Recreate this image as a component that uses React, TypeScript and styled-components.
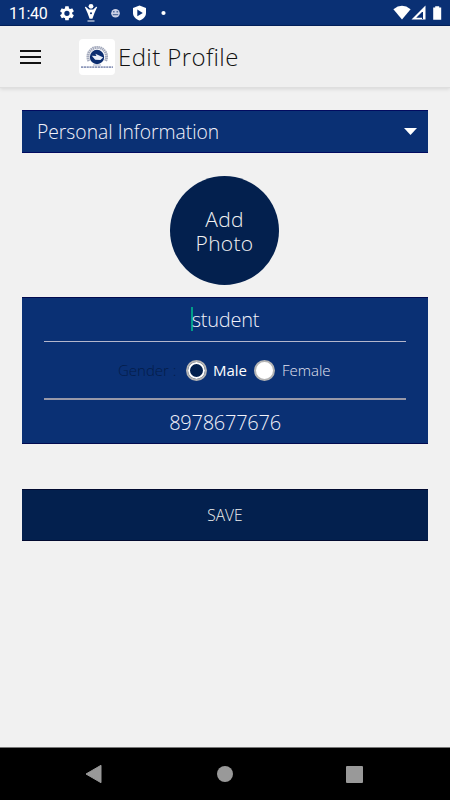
import React from "react";
import styled, { createGlobalStyle } from "styled-components";

const GlobalStyle = createGlobalStyle`
  * { box-sizing: border-box; }
  html, body { margin: 0; background: #f0f0f0; }
  button { font: inherit; border: 0; padding: 0; margin: 0; background: none; color: inherit; }
`;

const Screen = styled.div`
  display: flex;
  flex-direction: column;
  width: 450px;
  height: 800px;
  overflow: hidden;
  background: #f1f1f1;
  font-family: "Open Sans", "Noto Sans", sans-serif;
  font-weight: 350;
`;

const StatusBar = styled.header`
  display: flex;
  justify-content: space-between;
  flex: none;
  height: 26px;
  padding-left: 9px;
  background: #0a3074;
  border-bottom: 1px solid #03205c;
  color: #fff;
`;

const StatusLeft = styled.div`
  display: flex;
  align-items: flex-start;
`;

const Clock = styled.span`
  width: 45px;
  font: 400 16px/25px Roboto, sans-serif;
  letter-spacing: -0.3px;
  margin-top: 1px;
`;

const Toolbar = styled.nav`
  display: flex;
  align-items: center;
  flex: 0 0 62px;
  padding: 0 20px;
  background: #efefef;
  border-bottom: 1px solid #dedede;
  box-shadow: 0 1px 4px rgba(0, 0, 0, 0.12);
`;

const MenuButton = styled.button`
  display: flex;
  width: 59px;
`;

const Title = styled.h1`
  margin: 0 0 0 3px;
  font-size: 24px;
  line-height: 32px;
  font-weight: 320;
  letter-spacing: 0.4px;
  color: #111;
`;

const Content = styled.main`
  display: flex;
  flex-direction: column;
  flex: 1;
  padding: 22px 22px 0;
`;

const SectionSelect = styled.button`
  display: flex;
  align-items: center;
  justify-content: space-between;
  flex: 0 0 43px;
  padding: 0 11px 0 15px;
  background: #0a3074;
  border: solid #020b60;
  border-width: 1px 0;
  color: #f2f2fa;
  font-size: 19.3px;
`;

const PhotoButton = styled.button`
  display: flex;
  flex-direction: column;
  align-items: center;
  justify-content: center;
  align-self: center;
  width: 109px;
  height: 109px;
  margin: 23px 1px 12px 0;
  border-radius: 50%;
  background: #03204e;
  color: #f2f2f2;
  font-size: 21px;
  line-height: 24px;
  letter-spacing: 0.3px;
  flex: none;
`;

const Form = styled.form`
  display: flex;
  flex-direction: column;
  flex: 0 0 147px;
  padding: 0 22px;
  background: #0a3074;
  border: solid #020b50;
  border-width: 1px 0;
  color: #f2f2fa;
`;

const Field = styled.div<{ $height: number; $underlined?: boolean }>`
  display: flex;
  align-items: center;
  justify-content: center;
  height: ${(p) => p.$height}px;
  font-size: 20px;
  border-bottom: ${(p) => (p.$underlined ? "1px solid #b4b6cc" : "0")};
`;

const Caret = styled.i`
  width: 2px;
  height: 24px;
  margin: -2px -1px 0 0;
  background: #009d88;
`;

const NameText = styled.span`
  letter-spacing: -0.25px;
`;

const PhoneText = styled.span`
  letter-spacing: -0.25px;
  padding-top: 2px;
`;

const GenderRow = styled.div`
  display: flex;
  align-items: center;
  height: 58px;
  padding-left: 74px;
  border-bottom: 2px solid #9898a8;
  font-size: 15px;
`;

const GenderLabel = styled.span`
  width: 68px;
  color: #041c48;
`;

const Option = styled.label<{ $selected?: boolean }>`
  display: flex;
  align-items: center;
  gap: ${(p) => (p.$selected ? 6 : 7)}px;
  width: ${(p) => (p.$selected ? 68 : 80)}px;
  font-weight: ${(p) => (p.$selected ? 500 : 350)};
  color: ${(p) => (p.$selected ? "#fff" : "#e2e2f0")};
`;

const Radio = styled.span<{ $selected?: boolean }>`
  display: flex;
  flex: none;
  width: 21px;
  height: 21px;
  border: 2px solid #b4b4b4;
  border-radius: 50%;
  background: ${(p) => (p.$selected ? "#03204e" : "#fff")};
  box-shadow: inset 0 0 0 2px #fff;
`;

const SaveButton = styled.button`
  flex: 0 0 52px;
  margin-top: 45px;
  background: #03204e;
  border: solid #010a30;
  border-width: 1px 0;
  color: #f0f0f0;
  font-size: 15.5px;
`;

const NavBar = styled.footer`
  display: flex;
  align-items: center;
  justify-content: space-between;
  flex: 0 0 53px;
  padding: 0 87px 0 85px;
  background: #000;
  border-top: 1px solid #777;
`;

function StatusIcons() {
  return (
    <svg width="120" height="25" viewBox="54 0 120 25" fill="#fff">
      <g transform="translate(58.2 4.5) scale(.73)">
        <path d="M19.14 12.94c.04-.3.06-.61.06-.94s-.02-.64-.07-.94l2.03-1.58a.49.49 0 0 0 .12-.61l-1.92-3.32a.49.49 0 0 0-.59-.22l-2.39.96c-.5-.38-1.03-.7-1.62-.94l-.36-2.54A.48.48 0 0 0 13.92 2.4h-3.84c-.24 0-.43.17-.47.41l-.36 2.54c-.59.24-1.13.57-1.62.94l-2.39-.96a.48.48 0 0 0-.59.22L2.74 8.87c-.12.21-.08.47.12.61l2.03 1.58a6 6 0 0 0 0 1.88l-2.03 1.58a.49.49 0 0 0-.12.61l1.92 3.32c.12.22.37.29.59.22l2.39-.96c.5.38 1.03.7 1.62.94l.36 2.54c.05.24.24.41.48.41h3.84c.24 0 .44-.17.47-.41l.36-2.54c.59-.24 1.13-.56 1.62-.94l2.39.96c.22.08.47 0 .59-.22l1.92-3.32a.48.48 0 0 0-.12-.61ZM12 15.6a3.6 3.6 0 1 1 0-7.2 3.6 3.6 0 0 1 0 7.2Z" />
      </g>
      <circle cx="91" cy="6.3" r="2.4" />
      <path d="M84.8 7l1-.3 3 2.8h4.4l3-2.8 1 .3-2.8 6.2-2 5.5h-2.8l-2-5.5ZM87.5 20.4h7v1h-7Z" />
      <circle cx="91" cy="13.2" r="1" fill="#0a3074" />
      <circle cx="115.5" cy="13.3" r="4.3" fill="#cbd0e5" />
      <path d="M113 11h1.6v1.5H113ZM116.5 11h1.6v1.5h-1.6ZM112.8 14h5.4v1.2h-5.4Z" fill="#57709f" />
      <path d="M139.5 5.4 146 8v5c0 3.5-2.7 6-6.5 7.6C135.7 19 133 16.5 133 13V8Z" />
      <path d="M137.3 9.5v6.8l5.5-3.4Z" fill="#0a3074" />
      <circle cx="163.5" cy="13" r="2.1" />
    </svg>
  );
}

function SignalIcons() {
  return (
    <svg width="60" height="25" viewBox="390 0 60 25" fill="#fff">
      <path d="M393.4 9.2q8.6-6.8 17.2 0L402 19.5Z" />
      <path d="M425.5 5.4v14.1h-14Z" />
      <path d="M422 12v5.8h-5.8Z" fill="#0a3074" />
      <path d="M422 12h1v7h-1Z" fill="#0a3074" />
      <path d="M433.2 7.6h2v-1.4h4v1.4h2v12.2h-8Z" />
    </svg>
  );
}

function Logo() {
  return (
    <svg width="36" height="36" viewBox="0 0 36 36">
      <rect width="36" height="36" rx="4" fill="#fff" />
      <path d="M10 22a9.3 9.3 0 1 1 16.5 0" fill="none" stroke="#a3a9bc" strokeWidth="3" strokeDasharray="1.5 .5" />
      <circle cx="18" cy="18" r="7.2" fill="#0b2d70" />
      <path d="M12.8 16.7l4.6.3-1-2.3 4.8 2.2 3 1.7-2.8 2.5-5.2-.3Z" fill="#e8eef8" />
      <path d="M14 26h8" stroke="#aab0c8" />
      <path d="M2 28.2h32" stroke="#8d98ba" strokeWidth="1.7" strokeDasharray="2.2 .6" />
    </svg>
  );
}

export default function App() {
  return (
    <Screen>
      <GlobalStyle />
      <StatusBar>
        <StatusLeft>
          <Clock>11:40</Clock>
          <StatusIcons />
        </StatusLeft>
        <SignalIcons />
      </StatusBar>
      <Toolbar>
        <MenuButton aria-label="Menu">
          <svg width="22" height="16" viewBox="0 0 22 16" stroke="#111" strokeWidth="2">
            <path d="M0 2h21M0 8h21M0 14h21" />
          </svg>
        </MenuButton>
        <Logo />
        <Title>Edit Profile</Title>
      </Toolbar>
      <Content>
        <SectionSelect>
          <span>Personal Information</span>
          <svg width="13" height="7" viewBox="0 0 13 7">
            <path d="M0 0h13L6.5 7Z" fill="#fff" />
          </svg>
        </SectionSelect>
        <PhotoButton>
          <span>Add</span>
          <span>Photo</span>
        </PhotoButton>
        <Form>
          <Field $height={44} $underlined>
            <Caret />
            <NameText>student</NameText>
          </Field>
          <GenderRow>
            <GenderLabel>Gender :</GenderLabel>
            <Option $selected>
              <Radio $selected />
              Male
            </Option>
            <Option>
              <Radio />
              Female
            </Option>
          </GenderRow>
          <Field $height={43}>
            <PhoneText>8978677676</PhoneText>
          </Field>
        </Form>
        <SaveButton>SAVE</SaveButton>
      </Content>
      <NavBar>
        <svg width="17" height="20" viewBox="0 0 17 20">
          <path d="M1 10 16 1.3v17.4Z" fill="#999" stroke="#999" strokeLinejoin="round" />
        </svg>
        <svg width="18" height="16" viewBox="0 0 18 16">
          <circle cx="10" cy="8" r="8" fill="#999" />
        </svg>
        <svg width="17" height="17" viewBox="0 0 17 17">
          <rect width="17" height="17" rx="1" fill="#999" />
        </svg>
      </NavBar>
    </Screen>
  );
}
